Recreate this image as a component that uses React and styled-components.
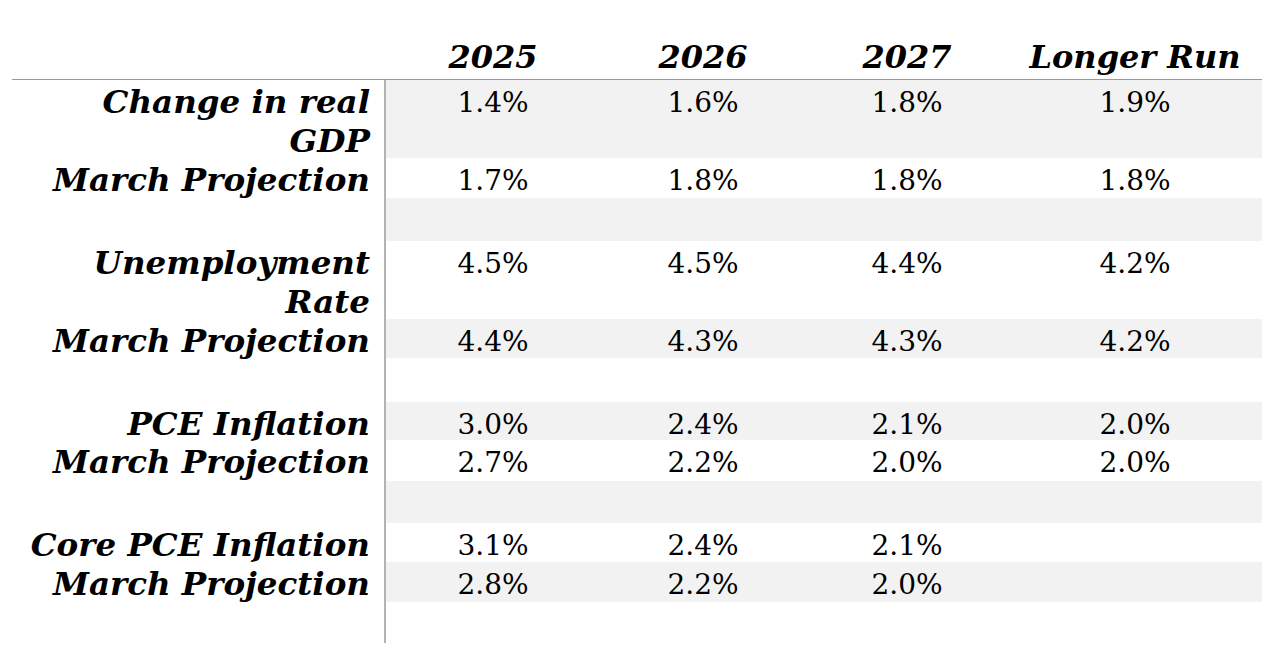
import React from 'react';
import styled, { createGlobalStyle } from 'styled-components';

const GlobalStyle = createGlobalStyle`
  html, body { margin: 0; padding: 0; background: #ffffff; }
  body { font-family: "DejaVu Serif", "Liberation Serif", serif; color: #000; }
  * { box-sizing: border-box; }
`;

const COLS = '374px 214px 206px 202px 254px';

const Page = styled.div`
  padding: 37px 0 0 12px;
`;

const Table = styled.div`
  width: 1250px;
  display: flex;
  flex-direction: column;
`;

const HeaderRow = styled.div`
  display: grid;
  grid-template-columns: ${COLS};
  height: 43px;
  border-bottom: 1px solid #9a9a9a;
`;

const HeaderCell = styled.div`
  text-align: center;
  font-weight: 700;
  font-style: italic;
  font-size: 32px;
  line-height: 39px;
  padding-top: 1px;
  white-space: nowrap;
`;

const Row = styled.div`
  display: grid;
  grid-template-columns: ${COLS};
  grid-template-rows: 100%;
  height: ${(p) => p.$h}px;
`;

const Label = styled.div`
  border-right: 2px solid #b3b3b3;
  text-align: right;
  padding: 2px 14px 0 0;
  font-weight: 700;
  font-style: italic;
  font-size: 32.5px;
  line-height: 39px;
  white-space: nowrap;
`;

const Value = styled.div`
  background: ${(p) => (p.$shade ? '#f2f2f2' : '#ffffff')};
  text-align: center;
  font-size: 28px;
  line-height: 39px;
  padding-top: 3px;
  white-space: nowrap;
`;

const headers = ['2025', '2026', '2027', 'Longer Run'];

const rows = [
  { label: ['Change in real', 'GDP'], values: ['1.4%', '1.6%', '1.8%', '1.9%'], h: 78 },
  { label: ['March Projection'], values: ['1.7%', '1.8%', '1.8%', '1.8%'], h: 40 },
  { label: [], values: ['', '', '', ''], h: 43 },
  { label: ['Unemployment', 'Rate'], values: ['4.5%', '4.5%', '4.4%', '4.2%'], h: 78 },
  { label: ['March Projection'], values: ['4.4%', '4.3%', '4.3%', '4.2%'], h: 39 },
  { label: [], values: ['', '', '', ''], h: 44 },
  { label: ['PCE Inflation'], values: ['3.0%', '2.4%', '2.1%', '2.0%'], h: 38 },
  { label: ['March Projection'], values: ['2.7%', '2.2%', '2.0%', '2.0%'], h: 41 },
  { label: [], values: ['', '', '', ''], h: 42 },
  { label: ['Core PCE Inflation'], values: ['3.1%', '2.4%', '2.1%', ''], h: 39 },
  { label: ['March Projection'], values: ['2.8%', '2.2%', '2.0%', ''], h: 40 },
  { label: [], values: ['', '', '', ''], h: 41 },
];

export default function App() {
  return (
    <>
      <GlobalStyle />
      <Page>
        <Table>
          <HeaderRow>
            <div />
            {headers.map((h) => (
              <HeaderCell key={h}>{h}</HeaderCell>
            ))}
          </HeaderRow>
          {rows.map((r, i) => (
            <Row key={i} $h={r.h}>
              <Label>
                {r.label.map((l, j) => (
                  <React.Fragment key={j}>
                    {j > 0 && <br />}
                    {l}
                  </React.Fragment>
                ))}
              </Label>
              {r.values.map((v, k) => (
                <Value key={k} $shade={i % 2 === 0}>
                  {v}
                </Value>
              ))}
            </Row>
          ))}
        </Table>
      </Page>
    </>
  );
}
